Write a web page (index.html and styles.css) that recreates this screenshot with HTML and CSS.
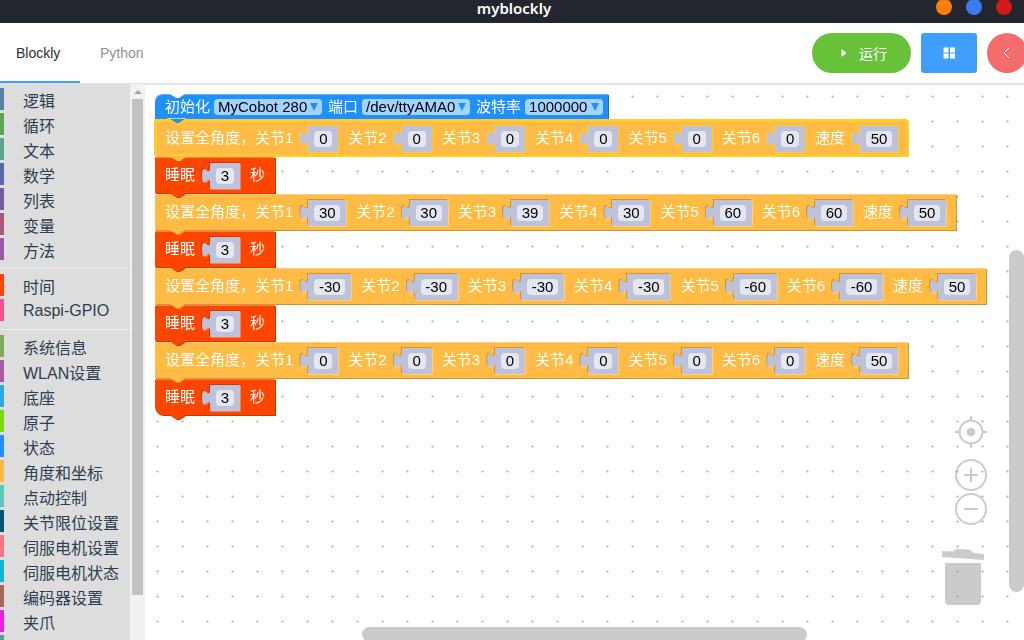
FILE: index.html
```html
<!DOCTYPE html>
<html lang="zh-CN">
<head>
<meta charset="utf-8">
<title>myblockly</title>
<link rel="stylesheet" href="styles.css">
</head>
<body>
<div class="titlebar">
  <span class="title">myblockly</span>
  <div class="window-buttons">
    <button class="dot orange" aria-label="最小化"></button>
    <button class="dot blue" aria-label="最大化"></button>
    <button class="dot red" aria-label="关闭"></button>
  </div>
</div>
<header class="toolbar">
  <nav class="tabs">
    <a class="tab active" href="#blockly">Blockly</a>
    <a class="tab" href="#python">Python</a>
  </nav>
  <div class="actions">
    <button class="btn run"><svg width="14" height="14" viewBox="0 0 14 14"><path d="M5.500 3v8l5-4z" fill="#fff"/></svg>运行</button>
    <button class="btn grid" aria-label="菜单"><svg width="14" height="14" viewBox="0 0 14 14"><path d="M1.500 1.500h5v5h-5zM8 1.500h5v5H8zM1.500 7.500h5v5h-5zM8 7.500h5v5H8z" fill="#fff"/></svg></button>
    <button class="btn back" aria-label="返回"><svg width="14" height="14" viewBox="0 0 14 14"><path d="M9 2L4 7l5 5" fill="none" stroke="#fff"/></svg></button>
  </div>
</header>
<main class="main">
  <aside class="toolbox">
    <ul class="categories">
      <li class="c-logic">逻辑</li>
      <li class="c-loop">循环</li>
      <li class="c-text">文本</li>
      <li class="c-math">数学</li>
      <li class="c-list">列表</li>
      <li class="c-var">变量</li>
      <li class="c-func">方法</li>
    </ul>
    <hr>
    <ul class="categories">
      <li class="c-time">时间</li>
      <li class="c-gpio">Raspi-GPIO</li>
    </ul>
    <hr>
    <ul class="categories">
      <li class="c-system">系统信息</li>
      <li class="c-wlan">WLAN设置</li>
      <li class="c-base">底座</li>
      <li class="c-atom">原子</li>
      <li class="c-state">状态</li>
      <li class="c-angle">角度和坐标</li>
      <li class="c-jog">点动控制</li>
      <li class="c-limit">关节限位设置</li>
      <li class="c-servo">伺服电机设置</li>
      <li class="c-servostate">伺服电机状态</li>
      <li class="c-encoder">编码器设置</li>
      <li class="c-gripper">夹爪</li>
      <li class="c-more"></li>
    </ul>
  </aside>
  <div class="scrollbar"><span class="arrow"></span><span class="thumb"></span></div>
  <section class="workspace">
    <svg class="dots" width="100%" height="100%">
      <defs><pattern id="dots" width="25" height="25" patternUnits="userSpaceOnUse"><path d="M11 11.500h3M12.500 10v3" stroke="#c8c8c8"/></pattern></defs>
      <rect width="100%" height="100%" fill="url(#dots)"/>
    </svg>
    <div class="stack">
      <div class="block init">
        <label class="pick">初始化 <span class="drop"><select class="wide"><option>MyCobot 280</option></select></span></label>
        <label class="pick">端口 <span class="drop"><select class="wide"><option>/dev/ttyAMA0</option></select></span></label>
        <label class="pick">波特率 <span class="drop"><select class="narrow"><option>1000000</option></select></span></label>
      </div>
      <div class="block angles selected">
        <svg class="joint" width="19" height="8" viewBox="0 0 19 8"><path d="M0 0h19L17 1l-6 4H8L2 1z" fill="#1e90ff"/><path d="M0 1h2l6 4h3l6-4h2" fill="none" stroke="#ffcb30" stroke-width="2"/></svg>
        <label class="arg">设置全角度，关节1 <span class="value"><input class="d1" value="0"></span></label>
        <label class="arg">关节2 <span class="value"><input class="d1" value="0"></span></label>
        <label class="arg">关节3 <span class="value"><input class="d1" value="0"></span></label>
        <label class="arg">关节4 <span class="value"><input class="d1" value="0"></span></label>
        <label class="arg">关节5 <span class="value"><input class="d1" value="0"></span></label>
        <label class="arg">关节6 <span class="value"><input class="d1" value="0"></span></label>
        <label class="arg">速度 <span class="value"><input class="d2" value="50"></span></label>
      </div>
      <div class="block sleep"><label class="arg">睡眠 <span class="value"><input class="d1" value="3"></span></label><span>秒</span></div>
      <div class="block angles">
        <label class="arg">设置全角度，关节1 <span class="value"><input class="d2" value="30"></span></label>
        <label class="arg">关节2 <span class="value"><input class="d2" value="30"></span></label>
        <label class="arg">关节3 <span class="value"><input class="d2" value="39"></span></label>
        <label class="arg">关节4 <span class="value"><input class="d2" value="30"></span></label>
        <label class="arg">关节5 <span class="value"><input class="d2" value="60"></span></label>
        <label class="arg">关节6 <span class="value"><input class="d2" value="60"></span></label>
        <label class="arg">速度 <span class="value"><input class="d2" value="50"></span></label>
      </div>
      <div class="block sleep"><label class="arg">睡眠 <span class="value"><input class="d1" value="3"></span></label><span>秒</span></div>
      <div class="block angles">
        <label class="arg">设置全角度，关节1 <span class="value"><input class="d3" value="-30"></span></label>
        <label class="arg">关节2 <span class="value"><input class="d3" value="-30"></span></label>
        <label class="arg">关节3 <span class="value"><input class="d3" value="-30"></span></label>
        <label class="arg">关节4 <span class="value"><input class="d3" value="-30"></span></label>
        <label class="arg">关节5 <span class="value"><input class="d3" value="-60"></span></label>
        <label class="arg">关节6 <span class="value"><input class="d3" value="-60"></span></label>
        <label class="arg">速度 <span class="value"><input class="d2" value="50"></span></label>
      </div>
      <div class="block sleep"><label class="arg">睡眠 <span class="value"><input class="d1" value="3"></span></label><span>秒</span></div>
      <div class="block angles">
        <label class="arg">设置全角度，关节1 <span class="value"><input class="d1" value="0"></span></label>
        <label class="arg">关节2 <span class="value"><input class="d1" value="0"></span></label>
        <label class="arg">关节3 <span class="value"><input class="d1" value="0"></span></label>
        <label class="arg">关节4 <span class="value"><input class="d1" value="0"></span></label>
        <label class="arg">关节5 <span class="value"><input class="d1" value="0"></span></label>
        <label class="arg">关节6 <span class="value"><input class="d1" value="0"></span></label>
        <label class="arg">速度 <span class="value"><input class="d2" value="50"></span></label>
      </div>
      <div class="block sleep last"><label class="arg">睡眠 <span class="value"><input class="d1" value="3"></span></label><span>秒</span></div>
    </div>
    <div class="controls">
      <button aria-label="居中"><svg width="32" height="32" viewBox="0 0 32 32" fill="none" stroke="#7f7f7f" stroke-width="2"><circle cx="16" cy="16" r="11.500"/><path d="M16 0v4M16 28v4M0 16h4M28 16h4"/><circle cx="16" cy="16" r="4.300" fill="#7f7f7f" stroke="none"/></svg></button>
      <button class="zoom-in" aria-label="放大"><svg width="32" height="32" viewBox="0 0 32 32" fill="none" stroke="#7f7f7f" stroke-width="2"><circle cx="16" cy="16" r="15"/><path d="M16 9v14M9 16h14"/></svg></button>
      <button class="zoom-out" aria-label="缩小"><svg width="32" height="32" viewBox="0 0 32 32" fill="none" stroke="#7f7f7f" stroke-width="2"><circle cx="16" cy="16" r="15"/><path d="M9 16h14"/></svg></button>
      <svg class="trash" width="44" height="58" viewBox="0 0 44 58" fill="#7f7f7f"><path d="M1.300 3L12.500 3.600Q13.500 1 16 1L28 1.700Q31 2 32 4.700L43.300 6.300L42.700 12L1 9zM4 15h36v38a4 4 0 0 1-4 4H8a4 4 0 0 1-4-4z"/></svg>
    </div>
    <span class="scroll-v"></span>
    <span class="scroll-h"></span>
  </section>
</main>
</body>
</html>
```
FILE: styles.css
```css
* { box-sizing: border-box; }

body {
  margin: 0;
  height: 100vh;
  display: flex;
  flex-direction: column;
  overflow: hidden;
  background: #fff;
  font-family: "Liberation Sans", "Noto Sans CJK SC", sans-serif;
}

button { border: 0; padding: 0; font: inherit; cursor: pointer; }

/* window title */
.titlebar {
  flex: none;
  display: grid;
  grid-template-columns: 1fr auto 1fr;
  height: 23px;
  padding: 0 12px 0 16px;
  background: #23262f;
}
.title {
  grid-column: 2;
  color: #fff;
  font: 600 15px/16px "Noto Sans", sans-serif;
}
.window-buttons {
  display: flex;
  justify-content: flex-end;
  gap: 14px;
  margin-top: -1px;
}
.dot { width: 16px; height: 16px; border-radius: 50%; }
.orange { background: #ff8000; }
.blue { background: #387cf0; }
.red { background: #d41919; }

/* tabs and actions */
.toolbar {
  flex: none;
  display: flex;
  justify-content: space-between;
  height: 61px;
  border-bottom: 1px solid #e4e4e4;
}
.tabs { display: flex; gap: 4px; }
.tab {
  padding: 0 16px;
  color: #909399;
  font-size: 14px;
  line-height: 60px;
  text-decoration: none;
}
.tab.active { min-width: 80px; color: #303133; border-bottom: 2px solid #409eff; }
.actions { display: flex; align-items: center; gap: 10px; margin-right: -3px; }
.btn {
  flex: none;
  display: flex;
  align-items: center;
  justify-content: center;
  height: 40px;
  color: #fff;
  font-size: 14px;
}
.run { gap: 9px; padding: 0 24px; border-radius: 20px; background: #67c23a; }
.grid { width: 56px; border-radius: 3px; background: #409eff; }
.back { width: 40px; border-radius: 50%; background: #f56c6c; }

.main { flex: 1; min-height: 0; display: flex; }

/* category list */
.toolbox {
  flex: none;
  width: 130px;
  padding-top: 4px;
  overflow: hidden;
  background: #ddd;
  color: #2c3e50;
}
.categories { margin: 0; padding: 0; list-style: none; }
.categories li {
  display: flex;
  align-items: center;
  height: 22px;
  margin-bottom: 3px;
  padding: 1px 0 0 19px;
  border-left: 4px solid;
  font-size: 16px;
  white-space: nowrap;
}
.toolbox hr { margin: 8px 0 5px; border: 0; border-top: 1px solid #eaeaea; }
.categories .c-logic { border-color: #5b80a5; }
.categories .c-loop { border-color: #5ba55b; }
.categories .c-text { border-color: #5ba58c; }
.categories .c-math { border-color: #5b67a5; }
.categories .c-list { border-color: #745ba5; }
.categories .c-var { border-color: #a55b80; }
.categories .c-func { border-color: #995ba5; }
.categories .c-time { border-color: #ff4500; }
.categories .c-gpio { border-color: #f5528b; }
.categories .c-system { border-color: #84a55b; }
.categories .c-wlan { border-color: #a55ba5; }
.categories .c-base { border-color: #30a7de; }
.categories .c-atom { border-color: #7bd900; }
.categories .c-state { border-color: #1e90ff; }
.categories .c-angle { border-color: #ffbb44; }
.categories .c-jog { border-color: #5bc8b8; }
.categories .c-limit { border-color: #05566e; }
.categories .c-servo { border-color: #f27884; }
.categories .c-servostate { border-color: #12b3cc; }
.categories .c-encoder { border-color: #a5665b; }
.categories .c-gripper { border-color: #ec1fe0; }
.categories .c-more { border-color: #5b99a5; }

.scrollbar {
  flex: none;
  display: flex;
  flex-direction: column;
  align-items: center;
  width: 15px;
  background: #f1f1f1;
}
.scrollbar .arrow {
  margin: 6px 0 5px;
  border: 4px solid transparent;
  border-top: 0;
  border-bottom-color: #a3a3a3;
}
.scrollbar .thumb { width: 11px; height: calc(100% - 60px); background: #c1c1c1; }

/* block canvas */
.workspace {
  position: relative;
  flex: 1;
  min-width: 0;
  border-top: 1px solid #e4e4e4;
  overflow: hidden;
}
.dots { position: absolute; inset: 0; }
.stack {
  display: flex;
  flex-direction: column;
  align-items: flex-start;
  gap: 1px;
  padding: 9px 0 0 10px;
  font-size: 15px;
}
.block {
  position: relative;
  display: flex;
  gap: 10px;
  height: 36px;
  padding: 0 10px;
  background: var(--fill);
  border-top: 1px solid var(--light);
  color: #fff;
  line-height: 34px;
  white-space: nowrap;
  filter: drop-shadow(1px 1px 0 var(--dark));
}
.block::after {
  content: "";
  position: absolute;
  top: 100%;
  left: 15px;
  width: 15px;
  height: 4px;
  background: var(--fill);
  clip-path: polygon(0 0, 15px 0, 9px 4px, 6px 4px);
}
.block:nth-child(1) { z-index: 9; }
.block:nth-child(2) { z-index: 10; }
.block:nth-child(3) { z-index: 7; }
.block:nth-child(4) { z-index: 6; }
.block:nth-child(5) { z-index: 5; }
.block:nth-child(6) { z-index: 4; }
.block:nth-child(7) { z-index: 3; }
.block:nth-child(8) { z-index: 2; }
.block:nth-child(9) { z-index: 1; }

.init { --fill: #1e90ff; --light: #62b1ff; --dark: #1873cc; }
.angles { --fill: #ffbb44; --light: #ffcf7c; --dark: #cc9636; }
.sleep { --fill: #ff4500; --light: #ff7d4d; --dark: #cc3700; }

.init {
  gap: 6px;
  height: 25px;
  padding-right: 5px;
  border-radius: 8px 0 0 0;
  line-height: 23px;
}
.init::before {
  content: "";
  position: absolute;
  top: -1px;
  left: 15px;
  width: 15px;
  height: 4px;
  background: #fff;
  clip-path: polygon(0 0, 15px 0, 9px 4px, 6px 4px);
}
.last { border-radius: 0 0 0 8px; }
.selected {
  border-top: 0;
  padding-top: 1px;
  box-shadow: inset 0 0 0 2px #ffcb30;
  filter: drop-shadow(1px 1px 0 #ffcb30) drop-shadow(-1px -1px 0 #ffcb30);
}
.joint { position: absolute; top: -1px; left: 13px; }

.pick { display: flex; gap: 4px; }
.drop { position: relative; display: flex; align-items: center; }
.drop::after {
  content: "";
  position: absolute;
  right: 4px;
  width: 8px;
  height: 8px;
  background: #1e90ff;
  clip-path: polygon(0 0, 100% 0, 50% 100%);
}
.drop select {
  appearance: none;
  height: 16px;
  margin: 0;
  padding: 0 0 0 4px;
  border: 0;
  border-radius: 4px;
  background: #a5d3ff;
  color: #000;
  font: 15px/16px "Liberation Sans", sans-serif;
}
.drop .wide { width: 108px; }
.drop .narrow { width: 78px; }

.arg { display: flex; gap: 15px; }
.value {
  position: relative;
  display: flex;
  height: 26px;
  margin-top: 5px;
  padding: 5px 6px;
  background: #bdc2db;
  filter: drop-shadow(-1px -1px 0 var(--dark)) drop-shadow(1px 1px 0 var(--light));
}
.selected .value { filter: drop-shadow(1px 1px 0 #ffcb30) drop-shadow(-1px -1px 0 #ffcb30); }
.value::before {
  content: "";
  position: absolute;
  top: 5px;
  left: -8px;
  width: 9px;
  height: 15px;
  background: #bdc2db;
  clip-path: path("M9 0H8C8 10 0 -8 0 7.5S8 5 8 15H9Z");
}
.value input {
  height: 16px;
  padding: 0;
  border: 0;
  border-radius: 4px;
  background: #e4e6f0;
  color: #000;
  font: 15px/16px "Liberation Sans", sans-serif;
  text-align: center;
}
.value .d1 { width: 18px; }
.value .d2 { width: 26px; }
.value .d3 { width: 31px; }

/* floating canvas controls */
.controls {
  position: absolute;
  right: 24px;
  bottom: 34px;
  display: flex;
  flex-direction: column;
  align-items: flex-end;
  opacity: .4;
}
.controls button { margin-right: 13px; background: none; height: 32px; }
.controls svg { display: block; }
.controls .zoom-in { margin-top: 11px; }
.controls .zoom-out { margin-top: 2px; }
.trash { margin: 23px 15px 0 0; }
.scroll-v, .scroll-h { position: absolute; border-radius: 8px; background: #cbcbcb; }
.scroll-v { top: 165px; right: 0; width: 15px; height: 342px; }
.scroll-h { left: 217px; bottom: -2px; width: 445px; height: 15px; }
```
